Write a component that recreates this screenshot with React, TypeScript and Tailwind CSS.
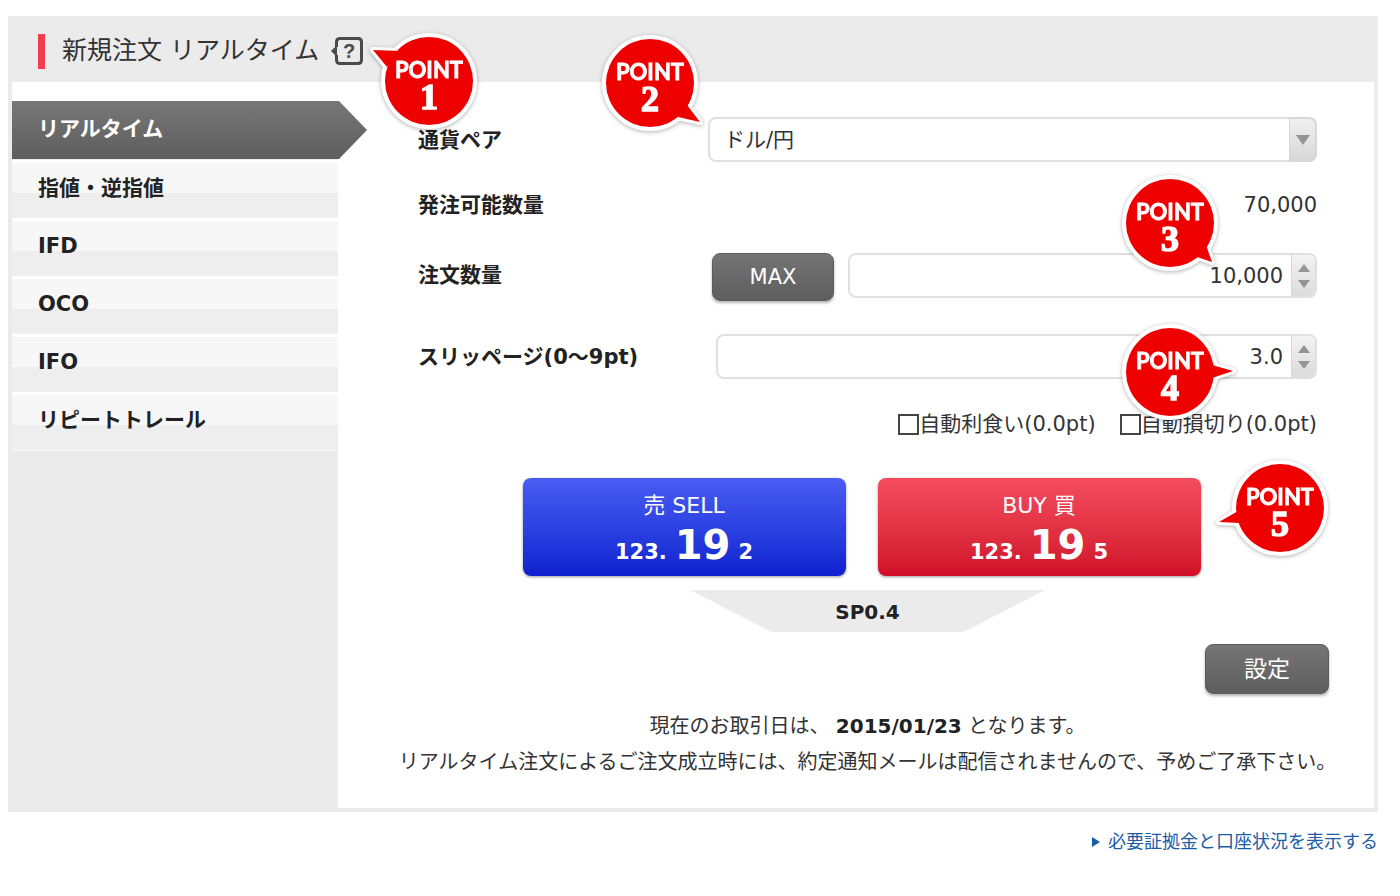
import { useState } from 'react';
import clsx from 'clsx';

const orderTypes = ['リアルタイム', '指値・逆指値', 'IFD', 'OCO', 'IFO', 'リピートトレール'];

const darkButton =
  'rounded-lg border border-[#5c5c5c] bg-linear-to-b from-[#757575] to-[#5e5e5e] text-white shadow-[0_2px_3px_rgba(0,0,0,0.3)]';

interface IPointBadge {
  step: number;
  tail: string;
  className: string;
}

const PointBadge = ({ step, tail, className }: IPointBadge) => (
  <svg
    viewBox="-70 -60 140 120"
    className={clsx(
      'pointer-events-none absolute z-20 h-[120px] w-[140px] max-w-none drop-shadow-[0_1px_2px_rgba(0,0,0,0.3)]',
      className
    )}
  >
    <g fill="#fff" stroke="#fff" strokeLinejoin="round">
      <circle r="44" strokeWidth="8" />
      <polygon points={tail} strokeWidth="6" />
    </g>
    <g fill="#ee0000">
      <circle r="44" />
      <polygon points={tail} />
    </g>
    <g fill="#fff" stroke="#fff" textAnchor="middle" fontWeight="700">
      <text y="-3" fontSize="22" fontFamily="Lato, sans-serif" strokeWidth="0.8">
        POINT
      </text>
      <text y="28" fontSize="36" fontFamily="'Liberation Serif', serif" strokeWidth="1.500">
        {step}
      </text>
    </g>
  </svg>
);

const HelpIcon = () => (
  <svg viewBox="0 0 32 30" className="h-[30px] w-8" fill="none" stroke="#4a4a4a" strokeWidth="3">
    <path d="M5.500 11V6Q5.500 2.500 9 2.500H27Q30.500 2.500 30.500 6V24Q30.500 27.500 27 27.500H9Q5.500 27.500 5.500 24V19" />
    <path d="M6 9L0 15L6 21Z" fill="#4a4a4a" stroke="none" />
    <text
      x="18"
      y="22"
      fontSize="20"
      fontWeight="700"
      textAnchor="middle"
      fill="#4a4a4a"
      stroke="none"
      fontFamily="'Liberation Sans', sans-serif"
    >
      ?
    </text>
  </svg>
);

interface ISpinField {
  id: string;
  value: number;
  step: number;
  digits: number;
  onChange: (value: number) => void;
}

const SpinField = ({ id, value, step, digits, onChange }: ISpinField) => (
  <div className="flex h-[45px] w-full overflow-hidden rounded-lg border-2 border-[#e0e0e0] bg-white">
    <input
      id={id}
      inputMode="decimal"
      className="min-w-0 flex-1 px-2 text-right text-[#333] outline-none"
      value={value.toLocaleString('en-US', { minimumFractionDigits: digits })}
      onChange={(e) => onChange(Number(e.target.value.replace(/,/g, '')) || 0)}
    />
    <div className="flex w-6 flex-col items-center justify-center gap-2 border-l border-[#d8d8d8] bg-linear-to-b from-[#f2f2f2] to-[#dcdcdc]">
      <button type="button" aria-label="増やす" onClick={() => onChange(value + step)}>
        <svg viewBox="0 0 12 8" className="h-2 w-3" fill="#949494">
          <path d="M6 0L12 8H0Z" />
        </svg>
      </button>
      <button type="button" aria-label="減らす" onClick={() => onChange(Math.max(0, value - step))}>
        <svg viewBox="0 0 12 8" className="h-2 w-3" fill="#949494">
          <path d="M0 0H12L6 8Z" />
        </svg>
      </button>
    </div>
  </div>
);

interface IPriceButton {
  label: string;
  pip: number;
  className: string;
}

const PriceButton = ({ label, pip, className }: IPriceButton) => (
  <button
    type="button"
    className={clsx(
      'flex h-[98px] w-[323px] flex-col items-center rounded-lg bg-linear-to-b pt-3 text-white shadow-[0_1px_3px_rgba(0,0,0,0.4)]',
      className
    )}
  >
    <span className="text-[22px] leading-8">{label}</span>
    <span className="flex items-baseline gap-2 font-bold leading-[46px]">
      <span>123.</span>
      <span className="text-[40px]">19</span>
      <span>{pip}</span>
    </span>
  </button>
);

const Sidebar = ({ active, onSelect }: { active: string; onSelect: (name: string) => void }) => (
  <nav className="mt-[19px] w-[326px] shrink-0 bg-[#ebebeb] font-bold">
    {orderTypes.map((name) =>
      name === active ? (
        <button
          type="button"
          key={name}
          className="relative z-10 mb-px flex h-[58px] w-[calc(100%+29px)] items-center bg-linear-to-b from-[#777] to-[#5e5e5e] px-[26px] pb-0.5 text-white [clip-path:polygon(0_0,calc(100%-28px)_0,100%_50%,calc(100%-28px)_100%,0_100%)]"
        >
          {name}
        </button>
      ) : (
        <button
          type="button"
          key={name}
          onClick={() => onSelect(name)}
          className="flex h-[58px] w-full items-center border-t-3 border-white bg-linear-to-b from-[#f7f7f7] from-55% to-[#eee] to-55% px-[26px] pb-1.5 text-[#222]"
        >
          {name}
        </button>
      )
    )}
    <div className="h-px bg-[#f8f8f8]" />
  </nav>
);

const label = 'w-[290px] shrink-0 font-bold text-[#222]';

const OrderForm = () => {
  const [amount, setAmount] = useState(10000);
  const [slippage, setSlippage] = useState(3);

  return (
    <form className="min-w-0 flex-1 pt-[35px] pr-[57px] pb-7 pl-20" onSubmit={(e) => e.preventDefault()}>
      <div className="flex items-center">
        <label htmlFor="pair" className={label}>
          通貨ペア
        </label>
        <div className="relative flex-1">
          <select
            id="pair"
            className="block h-[45px] w-full appearance-none rounded-lg border-2 border-[#e0e0e0] bg-white px-[14px] text-[#333]"
          >
            <option>ドル/円</option>
          </select>
          <div className="pointer-events-none absolute inset-y-0 right-0 flex w-7 items-center justify-center rounded-r-lg border-2 border-l border-[#d8d8d8] bg-linear-to-b from-[#f0f0f0] to-[#d8d8d8]">
            <svg viewBox="0 0 14 10" className="h-[10px] w-[14px]" fill="#949494">
              <path d="M0 0H14L7 10Z" />
            </svg>
          </div>
          <PointBadge step={2} tail="37,22 50,39 28,34" className="-top-[94px] -left-[128px]" />
        </div>
      </div>

      <div className="mt-[21px] flex h-11 items-center justify-between">
        <span className={label}>発注可能数量</span>
        <span className="text-[#333]">70,000</span>
      </div>

      <div className="mt-[26px] flex items-start">
        <label htmlFor="amount" className={clsx(label, 'leading-[45px]')}>
          注文数量
        </label>
        <div className="relative ml-1 flex flex-1 items-start gap-[14px]">
          <button type="button" className={clsx(darkButton, 'h-12 w-[122px] shrink-0')} onClick={() => setAmount(70000)}>
            MAX
          </button>
          <SpinField id="amount" value={amount} step={1000} digits={0} onChange={setAmount} />
          <PointBadge step={3} tail="36,22 42,39 24,33" className="-top-[90px] right-[77px]" />
        </div>
      </div>

      <div className="mt-[33px] flex items-center">
        <label htmlFor="slippage" className={label}>
          スリッページ(0〜9pt)
        </label>
        <div className="relative ml-2 flex-1">
          <SpinField id="slippage" value={slippage} step={0.1} digits={1} onChange={setSlippage} />
          <PointBadge step={4} tail="42,-7 63,-1 42,6" className="-top-[22px] right-[77px]" />
        </div>
      </div>

      <div className="mt-[29px] flex h-8 items-center justify-end gap-6 text-[#333]">
        {['自動利食い(0.0pt)', '自動損切り(0.0pt)'].map((name) => (
          <label key={name} className="flex items-center">
            <input
              type="checkbox"
              className="size-[21px] appearance-none border-2 border-[#444] bg-white checked:bg-[#444]"
            />
            {name}
          </label>
        ))}
      </div>

      <div className="relative mt-[38px] flex justify-center gap-8 pr-3">
        <PriceButton label="売 SELL" pip={2} className="from-[#4a5cf2] to-[#101fd0]" />
        <PriceButton label="BUY 買" pip={5} className="from-[#f44c5e] to-[#d00d28]" />
        <PointBadge step={5} tail="-42,3 -61,14 -40,15" className="-top-[30px] -right-[33px]" />
      </div>

      <div className="mx-auto mt-[14px] flex h-[42px] w-[355px] items-center justify-center bg-[#ebebeb] pt-0.5 text-[20px] font-bold text-[#222] [clip-path:polygon(0_0,100%_0,77%_100%,23%_100%)]">
        SP0.4
      </div>

      <div className="mt-3 -mr-3 flex justify-end">
        <button type="button" className={clsx(darkButton, 'h-[50px] w-[124px] text-[23px]')}>
          設定
        </button>
      </div>

      <div className="-mx-10 mt-[14px] text-center text-[20px] leading-9 text-[#333]">
        <p>
          現在のお取引日は、 <strong className="text-[#222]">2015/01/23</strong> となります。
        </p>
        <p>リアルタイム注文によるご注文成立時には、約定通知メールは配信されませんので、予めご了承下さい。</p>
      </div>
    </form>
  );
};

export default function App() {
  const [active, setActive] = useState(orderTypes[0]);

  return (
    <main className="bg-white pt-4 pr-[22px] pb-8 pl-2 font-['DejaVu_Sans','Noto_Sans_CJK_JP',sans-serif] text-[21px] leading-8">
      <section className="border-4 border-t-0 border-[#ebebeb]">
        <header className="flex h-[66px] items-center bg-[#ebebeb] px-[26px] pt-1">
          <span className="h-[35px] w-[7px] bg-[#f23c50]" />
          <h1 className="ml-[17px] text-[25px] text-[#333]">新規注文 リアルタイム</h1>
          <div className="relative ml-3">
            <button type="button" aria-label="ヘルプ" className="block">
              <HelpIcon />
            </button>
            <PointBadge step={1} tail="-28,-30 -56,-31 -42,-14" className="-top-[15px] left-7" />
          </div>
        </header>
        <div className="flex">
          <Sidebar active={active} onSelect={setActive} />
          <OrderForm />
        </div>
      </section>
      <div className="mt-[14px] flex justify-end">
        <a href="#margin" className="flex items-center gap-2 text-[18px] text-[#1a5ca8]">
          <svg viewBox="0 0 8 10" className="h-[10px] w-2" fill="currentColor">
            <path d="M0 0L8 5L0 10Z" />
          </svg>
          必要証拠金と口座状況を表示する
        </a>
      </div>
    </main>
  );
}
